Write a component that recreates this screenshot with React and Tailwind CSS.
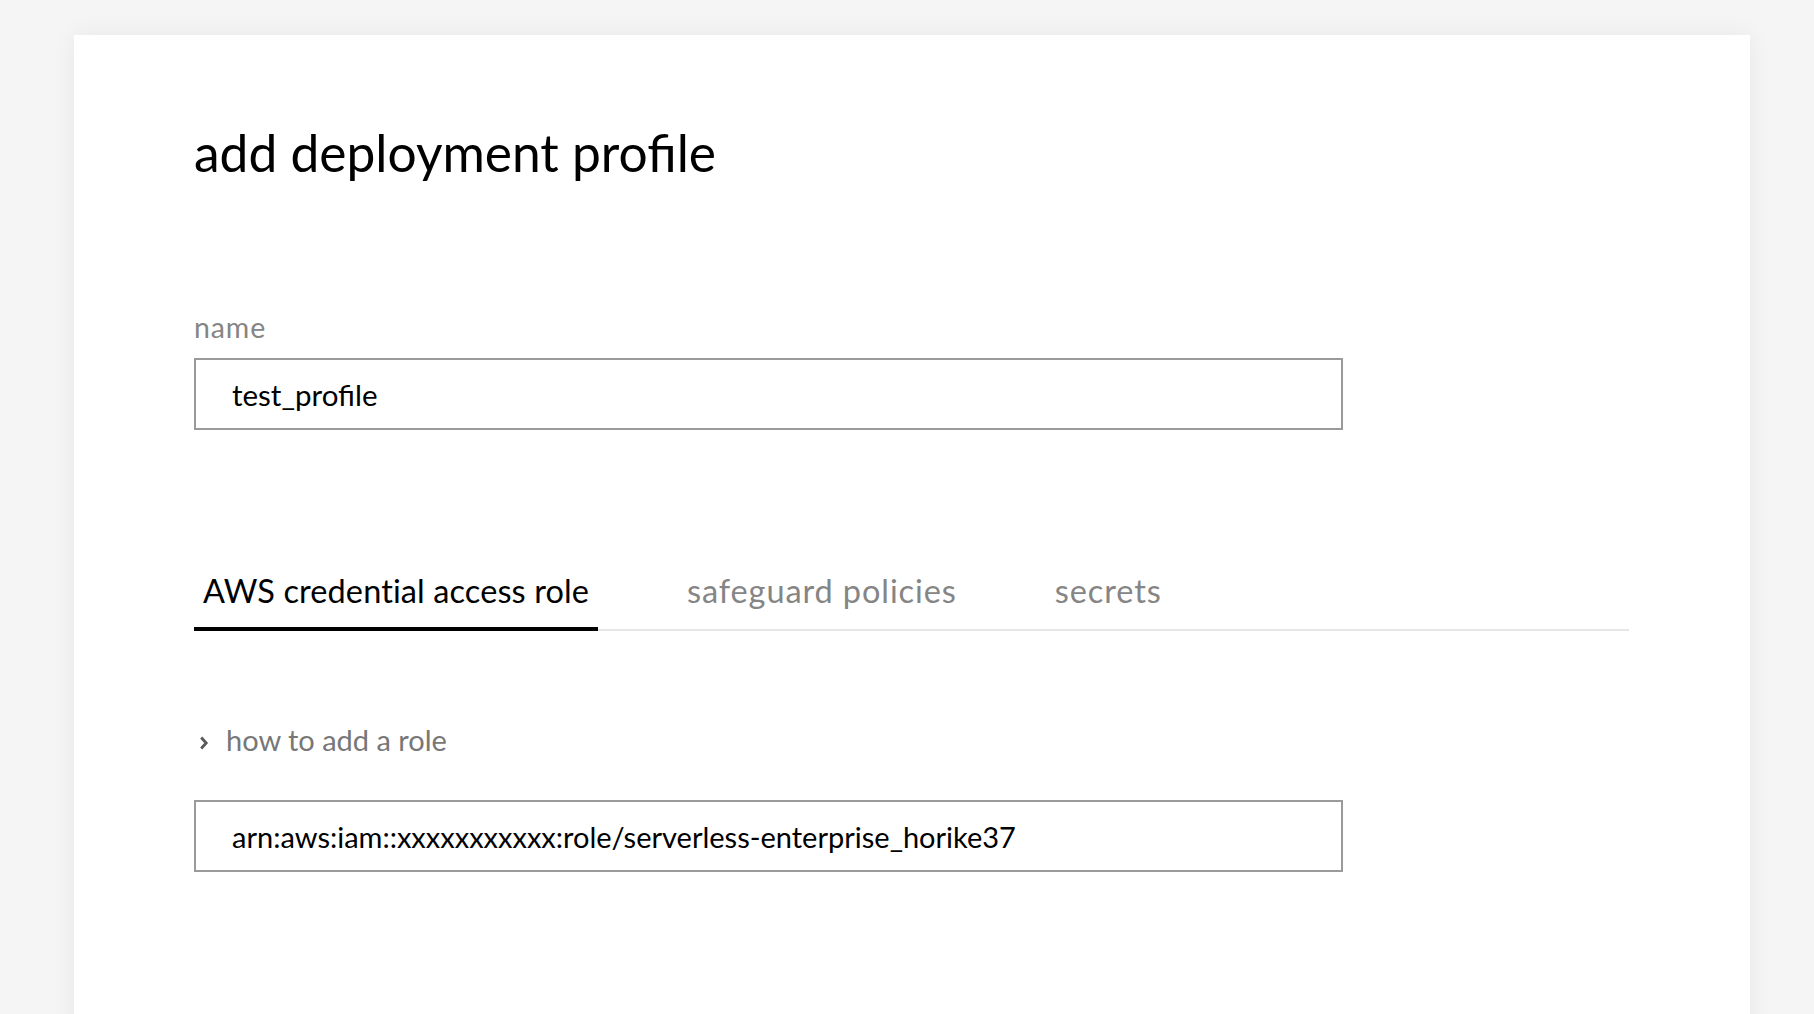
import { useState } from 'react';

const TABS = ['AWS credential access role', 'safeguard policies', 'secrets'];

function Chevron() {
  return (
    <svg width="10" height="16" viewBox="0 0 10 16" className="mt-[6px] shrink-0">
      <path d="M2.2 2.5L7.2 8l-5 5.5" fill="none" stroke="#5a5a5a" strokeWidth="2.8" />
    </svg>
  );
}

export default function App() {
  const [tab, setTab] = useState(0);
  const [name, setName] = useState('test_profile');
  const [arn, setArn] = useState('arn:aws:iam::xxxxxxxxxxx:role/serverless-enterprise_horike37');

  return (
    <div className="h-[1014px] overflow-hidden bg-[#f5f5f5] font-['Lato',sans-serif] text-black">
      <div className="ml-[74px] mt-[35px] min-h-[1100px] w-[1676px] bg-white pl-[120px] shadow-[0_0_24px_rgba(0,0,0,0.06)]">
        <h1 className="pt-[87px] text-[51.5px] font-normal leading-[60px]">add deployment profile</h1>

        <label className="mt-[130px] block text-[28.5px] leading-[30px] tracking-[0.9px] text-[#858585]">name</label>
        <input
          value={name}
          onChange={(e) => setName(e.target.value)}
          className="mt-[16px] block h-[72px] w-[1149px] border-2 border-[#9a9a9a] px-[36px] text-[29.5px] outline-none"
        />

        <div className="mt-[141px] flex w-[1435px] border-b-2 border-[#e6e6e6]">
          {TABS.map((t, i) => (
            <button
              key={t}
              onClick={() => setTab(i)}
              className={
                i === tab
                  ? '-mb-[2px] mr-[80px] border-b-4 border-black px-[9px] pb-[16px] text-[32.5px] leading-[40px] tracking-[0.1px] text-black'
                  : '-mb-[2px] mr-[80px] border-b-4 border-transparent px-[9px] pb-[16px] text-[32.5px] leading-[40px] tracking-[0.9px] text-[#858585]'
              }
            >
              {t}
            </button>
          ))}
        </div>

        <button className="mt-[93px] flex items-center gap-[17px] pl-[5px] text-[29px] leading-[32px] text-[#777]">
          <Chevron />
          <span>how to add a role</span>
        </button>

        <input
          value={arn}
          onChange={(e) => setArn(e.target.value)}
          className="mt-[44px] block h-[72px] w-[1149px] border-2 border-[#9a9a9a] px-[36px] text-[29px] outline-none"
        />
      </div>
    </div>
  );
}
